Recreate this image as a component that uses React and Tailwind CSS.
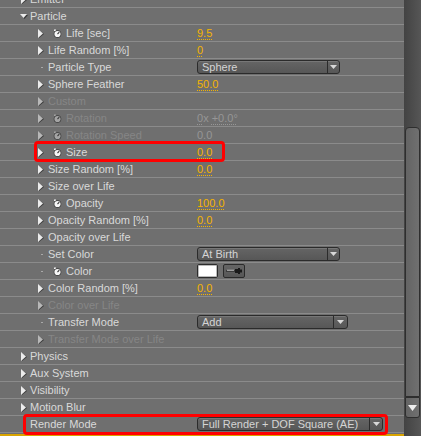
import React from "react";

const LABEL = "text-[#d9d9d9]";
const DIM = "text-[#868686]";

function TriRight({ dim }) {
  return (
    <svg width="6" height="9" viewBox="0 0 6 9" className="block">
      <polygon points="1,1 6,5 1,9" fill="#3a3a3a" />
      <polygon points="0,0 5,4.5 0,9" fill={dim ? "#b8b8b8" : "#ececec"} />
    </svg>
  );
}

function TriDown() {
  return (
    <svg width="8" height="5" viewBox="0 0 8 5" className="block">
      <polygon points="1,1 8,1 4.5,5" fill="#3a3a3a" />
      <polygon points="0,0 7,0 3.5,4" fill="#ececec" />
    </svg>
  );
}

function Watch({ dim }) {
  const c = dim ? "#a4a4a4" : "#f6f6f6";
  return (
    <svg width="9" height="9" viewBox="0 0 9 9" className="block">
      <rect x="1" y="0.5" width="2" height="1.5" fill={c} />
      <circle cx="4.5" cy="5" r="3.8" fill="#3c3c3c" />
      <circle cx="4.5" cy="5" r="3.1" fill={c} />
      <line x1="4.5" y1="5" x2="6.3" y2="3.2" stroke="#3a3a3a" strokeWidth="1.1" />
    </svg>
  );
}

function Val({ children, dim }) {
  return (
    <span
      className={`${dim ? "text-[#969696] decoration-[#969696]" : "text-[#f5b400] decoration-[#f5b400]"} underline decoration-dotted underline-offset-[2px]`}
    >
      {children}
    </span>
  );
}

function Dropdown({ text, w, arrow = 12 }) {
  return (
    <div
      className="flex h-[14px] rounded-[3px] border border-[#2b2b2b] bg-gradient-to-b from-[#656565] to-[#575757] shadow-[inset_0_1px_0_#777]"
      style={{ width: w }}
    >
      <div className="flex-1 pl-[4px] leading-[12px] text-[#d4d4d4] truncate">{text}</div>
      <div
        className="flex items-center justify-center border-l border-[#2b2b2b]"
        style={{ width: arrow }}
      >
        <svg width="7" height="4" viewBox="0 0 7 4">
          <polygon points="0,0 7,0 3.5,4" fill="#d8d8d8" />
        </svg>
      </div>
    </div>
  );
}

function Row({ level = 2, icon = "tri", watch, label, dim, children, highlight }) {
  const pad = level === 1 ? "pl-[21px]" : "pl-[38px]";
  const iconW = level === 1 ? "w-[9px]" : "w-[10px]";
  return (
    <div className="relative flex h-[17px] border-b border-[#8b8b8b] items-center">
      <div className={`flex items-center w-[196px] shrink-0 ${pad}`}>
        <div className={`${iconW} shrink-0 flex items-center`}>
          {icon === "tri" && <TriRight dim={dim} />}
          {icon === "down" && (
            <div className="-ml-[1px]">
              <TriDown />
            </div>
          )}
          {icon === "dot" && <div className="ml-[3px] w-[2px] h-[1px] bg-[#a8a8a8]" />}
        </div>
        {watch && (
          <div className="w-[18px] shrink-0 pl-[5px]">
            <Watch dim={dim} />
          </div>
        )}
        <span className={`whitespace-nowrap ${dim ? DIM : LABEL}`}>{label}</span>
      </div>
      <div className="flex items-center gap-[5px] pl-[1px]">{children}</div>
      {highlight}
    </div>
  );
}

function RedBox({ className }) {
  return (
    <div
      className={`absolute border-[3px] border-[#ff0000] rounded-[4px] pointer-events-none ${className}`}
    />
  );
}

function Scrollbar() {
  return (
    <div className="w-[17px] h-full flex flex-col bg-gradient-to-r from-[#434343] to-[#565656]">
      <div className="h-[127px]" />
      <div className="h-[270px] mx-[1px] rounded-t-[4px] border border-[#2e2e2e] bg-gradient-to-r from-[#646464] to-[#707070]" />
      <div className="h-[21px] mx-[1px] rounded-b-[3px] border border-[#2e2e2e] bg-gradient-to-r from-[#646464] to-[#707070] flex items-center justify-center">
        <svg width="9" height="6" viewBox="0 0 9 6">
          <polygon points="0,0 9,0 4.5,6" fill="#eeeeee" />
        </svg>
      </div>
      <div className="flex-1" />
    </div>
  );
}

export default function App() {
  return (
    <div className="w-[421px] h-[436px] overflow-hidden flex bg-[#6f6f6f] text-[11px] leading-[13px] font-['Liberation_Sans',Arial,sans-serif]">
      <div className="w-[404px] h-full flex flex-col overflow-hidden">
        <div className="-mt-[9px] flex flex-col">
          <Row level={1} label="Emitter" />
          <Row level={1} icon="down" label="Particle" />
          <Row watch label="Life [sec]">
            <Val>9.5</Val>
          </Row>
          <Row label="Life Random [%]">
            <Val>0</Val>
          </Row>
          <Row icon="dot" label="Particle Type">
            <Dropdown text="Sphere" w={143} />
          </Row>
          <Row label="Sphere Feather">
            <Val>50.0</Val>
          </Row>
          <Row dim label="Custom" />
          <Row dim watch label="Rotation">
            <span className="text-[#969696]">
              <Val dim>0</Val>x <Val dim>+0.0°</Val>
            </span>
          </Row>
          <Row dim watch label="Rotation Speed">
            <span className="text-[#969696]">0.0</span>
          </Row>
          <Row
            watch
            label="Size"
            highlight={<RedBox className="left-[34px] -top-[3px] w-[191px] h-[21px]" />}
          >
            <Val>0.0</Val>
          </Row>
          <Row label="Size Random [%]">
            <Val>0.0</Val>
          </Row>
          <Row label="Size over Life" />
          <Row watch label="Opacity">
            <Val>100.0</Val>
          </Row>
          <Row label="Opacity Random [%]">
            <Val>0.0</Val>
          </Row>
          <Row label="Opacity over Life" />
          <Row icon="dot" label="Set Color">
            <Dropdown text="At Birth" w={143} />
          </Row>
          <Row icon="dot" watch label="Color">
            <div className="w-[21px] h-[14px] rounded-[2px] border border-[#2b2b2b] bg-[#ffffff] shadow-[inset_0_0_0_1px_#bbb]" />
            <div className="w-[22px] h-[14px] rounded-[2px] border border-[#2b2b2b] bg-gradient-to-b from-[#656565] to-[#575757] flex items-center justify-center">
              <svg width="16" height="6" viewBox="0 0 16 6">
                <rect x="0" y="2.5" width="9" height="1" fill="#1a1a1a" />
                <rect x="9" y="1" width="3" height="4" fill="#1a1a1a" />
                <rect x="12" y="0" width="2" height="6" fill="#1a1a1a" />
                <rect x="14" y="1.5" width="2" height="3" fill="#1a1a1a" />
                <rect x="1" y="1.8" width="7" height="0.8" fill="#dddddd" />
              </svg>
            </div>
          </Row>
          <Row label="Color Random [%]">
            <Val>0.0</Val>
          </Row>
          <Row dim label="Color over Life" />
          <Row icon="dot" label="Transfer Mode">
            <Dropdown text="Add" w={151} arrow={14} />
          </Row>
          <Row dim label="Transfer Mode over Life" />
          <Row level={1} label="Physics" />
          <Row level={1} label="Aux System" />
          <Row level={1} label="Visibility" />
          <Row level={1} label="Motion Blur" />
          <Row
            level={1}
            icon="none"
            label="Render Mode"
            highlight={<RedBox className="left-[23px] -top-[2px] w-[365px] h-[21px]" />}
          >
            <Dropdown text="Full Render + DOF Square (AE)" w={186} arrow={13} />
          </Row>
        </div>
        <div className="h-[2px] mt-auto bg-[#d9a400]" />
      </div>
      <Scrollbar />
    </div>
  );
}
